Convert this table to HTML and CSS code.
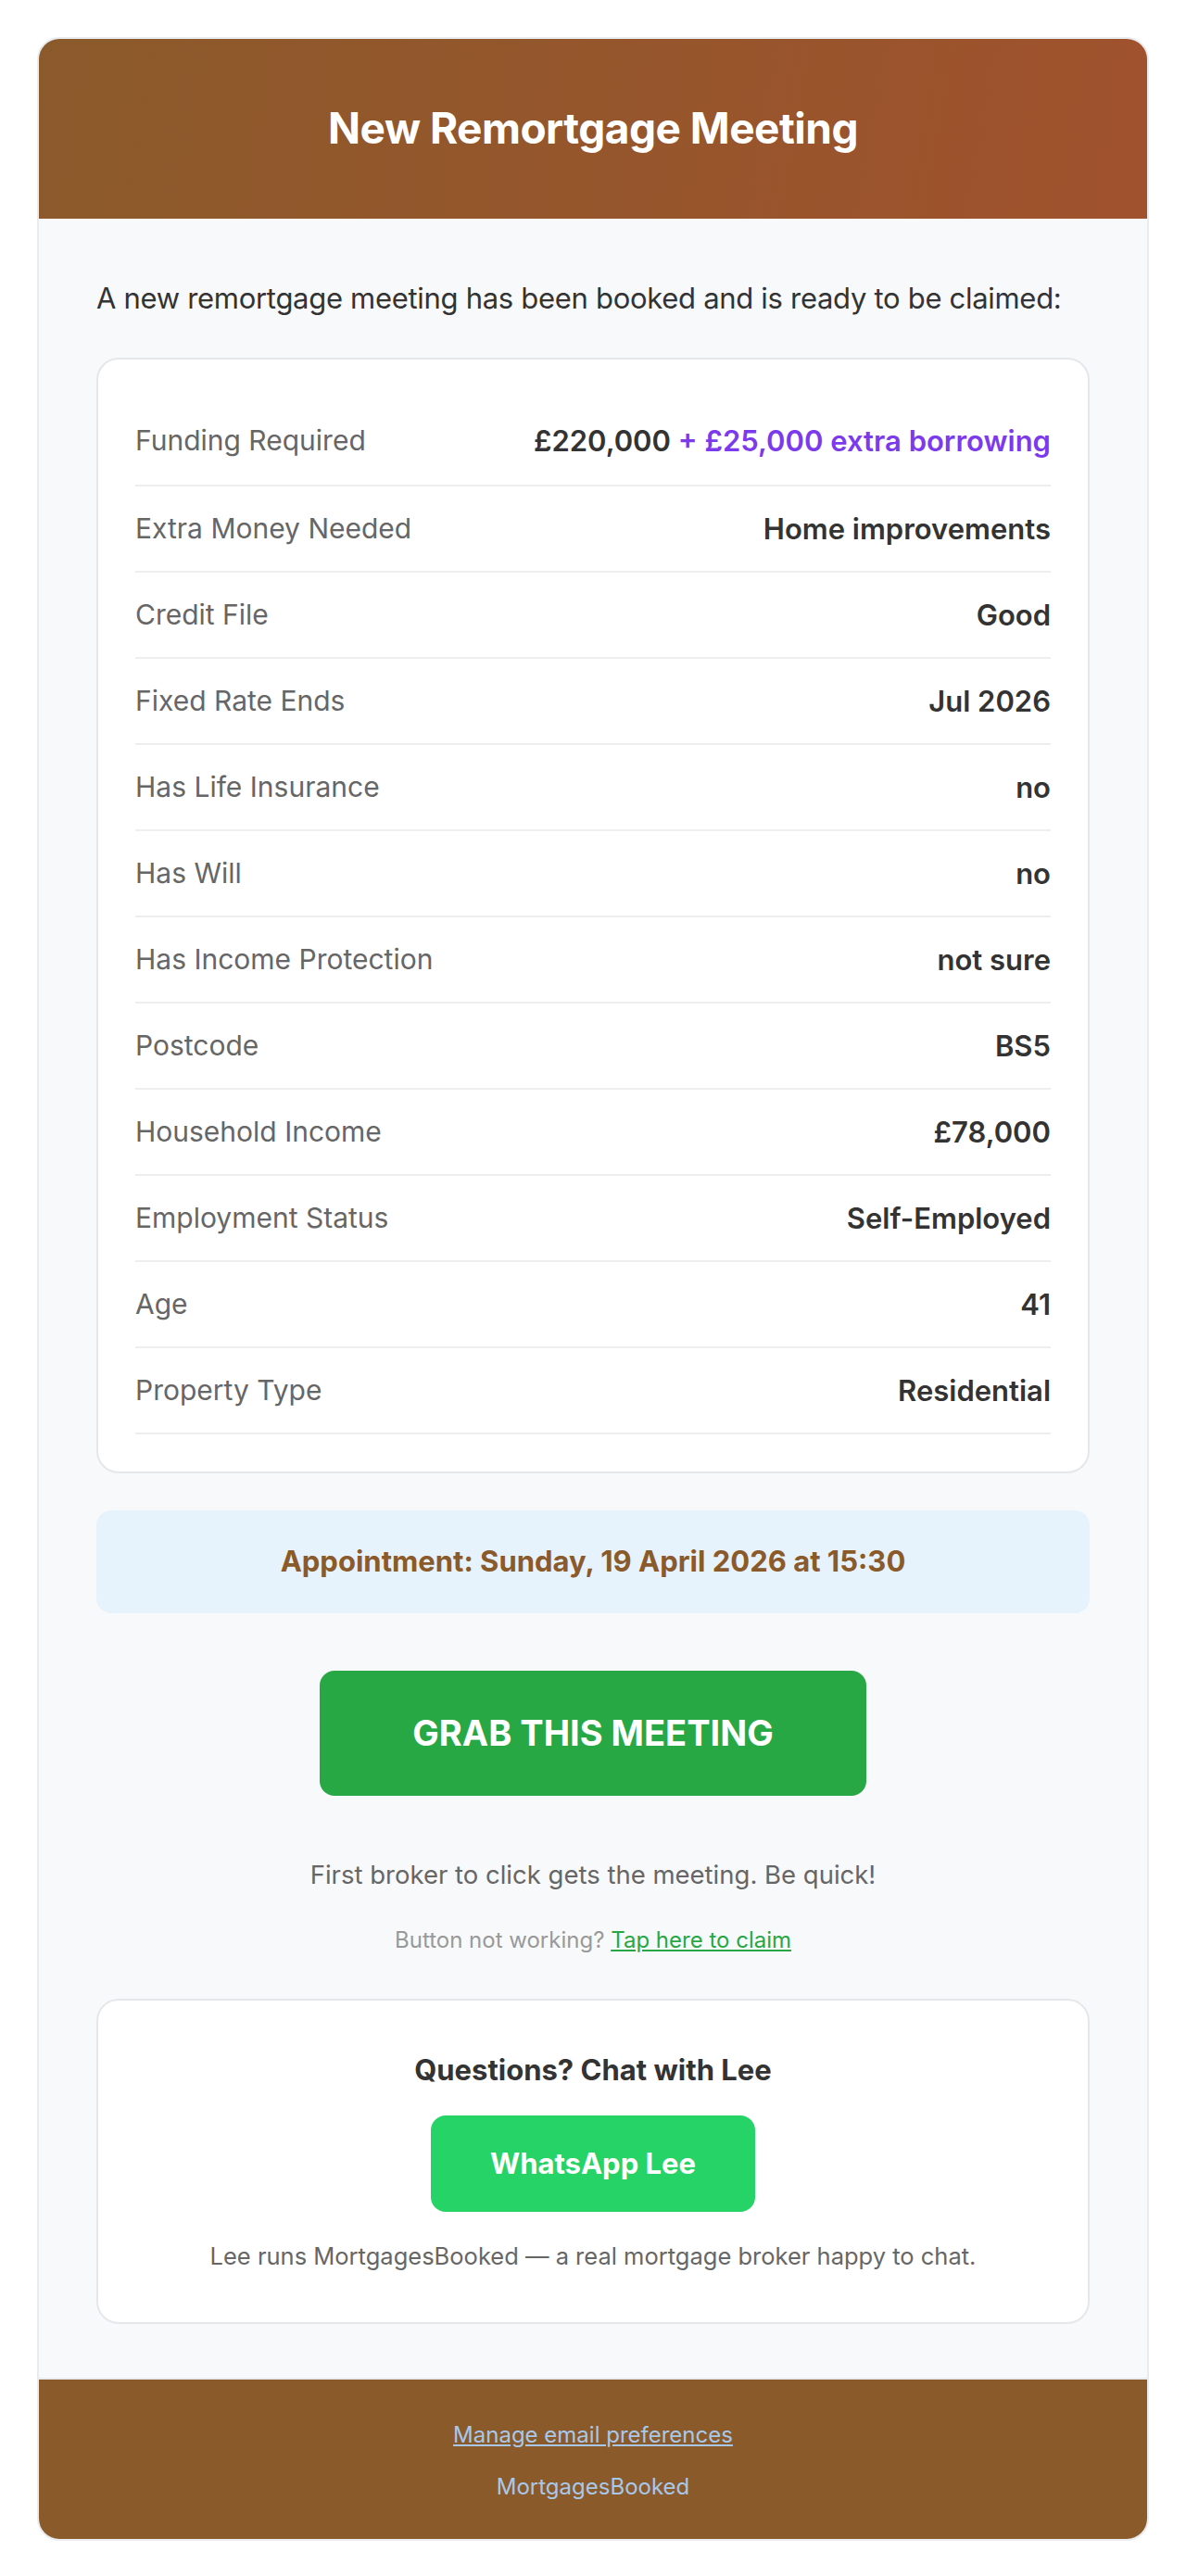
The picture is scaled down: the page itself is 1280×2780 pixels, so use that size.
FILE: index.html
```html
<!DOCTYPE html>
<html lang="en">
<head>
<meta charset="utf-8">
<title>New Remortgage Meeting</title>
<link rel="stylesheet" href="styles.css">
</head>
<body>
<div class="email">
  <div class="header">
    <h1>New Remortgage Meeting</h1>
  </div>
  <div class="content">
    <p class="intro">A new remortgage meeting has been booked and is ready to be claimed:</p>
    <div class="card">
      <div class="row"><span class="label">Funding Required</span><span class="value">£220,000 <span class="extra">+ £25,000 extra borrowing</span></span></div>
      <div class="row"><span class="label">Extra Money Needed</span><span class="value">Home improvements</span></div>
      <div class="row"><span class="label">Credit File</span><span class="value">Good</span></div>
      <div class="row"><span class="label">Fixed Rate Ends</span><span class="value">Jul 2026</span></div>
      <div class="row"><span class="label">Has Life Insurance</span><span class="value">no</span></div>
      <div class="row"><span class="label">Has Will</span><span class="value">no</span></div>
      <div class="row"><span class="label">Has Income Protection</span><span class="value">not sure</span></div>
      <div class="row"><span class="label">Postcode</span><span class="value">BS5</span></div>
      <div class="row"><span class="label">Household Income</span><span class="value">£78,000</span></div>
      <div class="row"><span class="label">Employment Status</span><span class="value">Self-Employed</span></div>
      <div class="row"><span class="label">Age</span><span class="value">41</span></div>
      <div class="row"><span class="label">Property Type</span><span class="value">Residential</span></div>
    </div>
    <div class="appointment">Appointment: Sunday, 19 April 2026 at 15:30</div>
    <div class="cta">
      <a class="grab" href="#">GRAB THIS MEETING</a>
    </div>
    <p class="note">First broker to click gets the meeting. Be quick!</p>
    <p class="fallback">Button not working? <a href="#">Tap here to claim</a></p>
    <div class="chat">
      <h2>Questions? Chat with Lee</h2>
      <a class="wa" href="#">WhatsApp Lee</a>
      <p class="chat-note">Lee runs MortgagesBooked — a real mortgage broker happy to chat.</p>
    </div>
  </div>
  <div class="footer">
    <a href="#">Manage email preferences</a>
    <p>MortgagesBooked</p>
  </div>
</div>
</body>
</html>
```

FILE: styles.css
```css
* { box-sizing: border-box; }
html, body { margin: 0; padding: 0; background: #ffffff; }
body {
  font-family: Inter, "Noto Sans", "Liberation Sans", sans-serif;
  color: #333333;
  padding: 40px 0;
}
.email {
  width: 1200px;
  margin: 0 auto;
  background: #f8f9fa;
  border: 2px solid #e9ecef;
  border-radius: 24px;
  overflow: hidden;
}
.header {
  background: linear-gradient(100deg, #8b5a2b 0%, #a0522d 100%);
  padding: 62px 40px;
  text-align: center;
  margin: -2px -2px 0;
}
.header h1 {
  margin: 0;
  color: #ffffff;
  font-size: 46px;
  line-height: 72px;
  font-weight: 700;
  letter-spacing: -0.5px;
}
.content {
  padding: 62px 62px 58px;
}
.intro {
  margin: 0 0 40px;
  font-size: 31px;
  line-height: 48px;
  letter-spacing: -0.3px;
  color: #333333;
  white-space: nowrap;
}
.card {
  background: #ffffff;
  border: 2px solid #e5e7eb;
  border-radius: 24px;
  padding: 41px 40px 40px;
}
.row {
  display: flex;
  justify-content: space-between;
  align-items: center;
  padding: 24px 0;
  border-bottom: 2px solid #eeeeee;
  line-height: 43px;
  font-size: 30px;
}
.row:first-child { padding-top: 25px; padding-bottom: 26px; }
.label { color: #666666; }
.value { color: #333333; font-weight: 600; text-align: right; font-size: 31px; }
.extra { color: #7c3aed; }
.appointment {
  margin-top: 40px;
  background: #e7f3fc;
  border-radius: 16px;
  padding: 30px 40px 31px;
  text-align: center;
  color: #8b5a2b;
  font-weight: 700;
  font-size: 31px;
  line-height: 50px;
}
.cta {
  display: flex;
  justify-content: center;
  margin-top: 62px;
}
.grab {
  display: block;
  background: #28a745;
  color: #ffffff;
  text-decoration: none;
  font-weight: 700;
  font-size: 38px;
  line-height: 55px;
  padding: 40px 100px;
  border-radius: 16px;
}
.note {
  margin: 65px 0 0;
  text-align: center;
  color: #666666;
  font-size: 27.5px;
  line-height: 40px;
}
.fallback {
  margin: 33px 0 0;
  text-align: center;
  color: #999999;
  font-size: 24px;
  line-height: 36px;
}
.fallback a { color: #28a745; }
.chat {
  margin-top: 45px;
  background: #ffffff;
  border: 2px solid #e5e7eb;
  border-radius: 24px;
  padding: 51px 40px 51px;
  display: flex;
  flex-direction: column;
  align-items: center;
}
.chat h2 {
  margin: 0;
  font-size: 31px;
  line-height: 48px;
  font-weight: 700;
  color: #333333;
}
.wa {
  margin-top: 25px;
  display: block;
  background: #25d366;
  color: #ffffff;
  text-decoration: none;
  font-weight: 700;
  font-size: 31px;
  line-height: 48px;
  padding: 28px 64px;
  border-radius: 16px;
}
.chat-note {
  margin: 28px 0 0;
  font-size: 25.5px;
  line-height: 40px;
  color: #666666;
  text-align: center;
}
.footer {
  background: #8b5a2b;
  border-top: 2px solid #e9ecef;
  padding: 42px 40px 40px;
  text-align: center;
  margin: 0 -2px -2px;
}
.footer a {
  color: #a8c8ea;
  font-size: 24px;
  line-height: 36px;
}
.footer p {
  margin: 20px 0 0;
  color: #a8c8ea;
  font-size: 24px;
  line-height: 36px;
}
```
